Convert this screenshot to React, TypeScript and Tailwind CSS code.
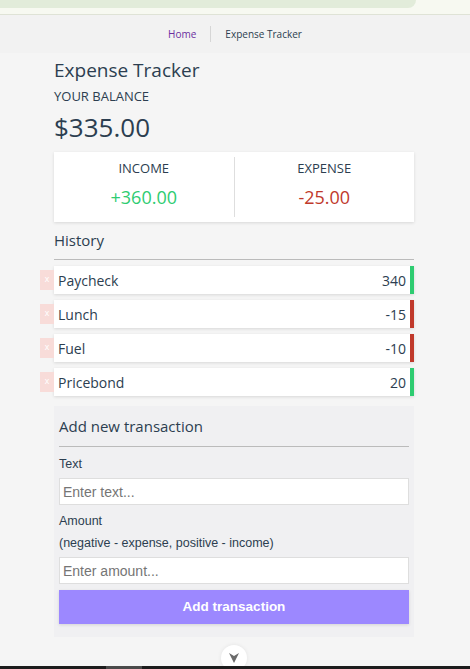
import React from "react";

const items = [
  { t: "Paycheck", a: "340", pos: true },
  { t: "Lunch", a: "-15", pos: false },
  { t: "Fuel", a: "-10", pos: false },
  { t: "Pricebond", a: "20", pos: true },
];

export default function App() {
  const seg = { fontFamily: '"Open Sans", "Noto Sans", sans-serif' };
  const arial = { fontFamily: '"Liberation Sans", Arial, sans-serif' };
  return (
    <div className="relative w-[470px] h-[669px] overflow-hidden bg-[#f5f5f5]" style={seg}>
      <div className="h-[15px] bg-[#f7f9f1] border-b border-[#dfe3d6]">
        <div className="h-[8px] w-[416px] bg-[#e2ecda] rounded-br-[10px]" />
      </div>
      <div className="h-[38px] bg-[#f2f2f2] flex items-center justify-center text-[10px] text-[#2c3e50]">
        <span className="text-[#6b2fa0]">Home</span>
        <span className="mx-[14px] w-px h-[16px] bg-[#d6d6d6]" />
        <span>Expense Tracker</span>
      </div>
      <div className="w-[360px] ml-[54px] text-[#2c3e50]">
        <h1 className="text-[19px] leading-[26px] mt-[4px]">Expense Tracker</h1>
        <div className="text-[13px] leading-[18px] mt-[4px] uppercase">Your balance</div>
        <div className="text-[26px] leading-[32px] mt-[6px]">$335.00</div>
        <div className="mt-[9px] h-[70px] bg-white shadow-[0_1px_3px_rgba(0,0,0,0.12)] flex">
          <div className="flex-1 flex flex-col items-center pt-[7px]">
            <div className="text-[13px] leading-[18px] uppercase">Income</div>
            <div className="text-[18px] leading-[24px] mt-[8px] text-[#2ecc71]">+360.00</div>
          </div>
          <div className="w-px bg-[#dedede] my-[5px]" />
          <div className="flex-1 flex flex-col items-center pt-[7px]">
            <div className="text-[13px] leading-[18px] uppercase">Expense</div>
            <div className="text-[18px] leading-[24px] mt-[8px] text-[#c0392b]">-25.00</div>
          </div>
        </div>
        <h3 className="text-[15px] leading-[22px] mt-[7px] pb-[8px] border-b border-[#bbb]">History</h3>
        <ul className="mt-[6px] flex flex-col gap-[6px]">
          {items.map((it) => (
            <li
              key={it.t}
              className={`relative h-[28px] bg-white flex items-center justify-between pl-[4px] pr-[4px] text-[14px] shadow-[0_1px_3px_rgba(0,0,0,0.12)] border-r-[4px] ${
                it.pos ? "border-[#2ecc71]" : "border-[#c0392b]"
              }`}
            >
              <span
                className="absolute left-[-14px] top-[4px] w-[14px] h-[20px] bg-[#f8dcd9] text-white text-[9px] flex items-center justify-center"
                style={arial}
              >
                x
              </span>
              <span>{it.t}</span>
              <span>{it.a}</span>
            </li>
          ))}
        </ul>
        <div className="mt-[10px] bg-[#f0f0f2] px-[5px] pt-[10px] pb-[13px]">
          <h3 className="text-[15px] leading-[20px] pb-[10px] border-b border-[#bbb]">Add new transaction</h3>
          <div className="text-[12.5px] leading-[16px] mt-[9px] text-[#2c3e50]" style={arial}>Text</div>
          <input
            className="mt-[6px] w-full h-[27px] bg-white border border-[#dedede] px-[3px] text-[14px] placeholder:text-[#757575] outline-none"
            style={arial}
            placeholder="Enter text..."
          />
          <div className="text-[12.5px] leading-[16px] mt-[8px] text-[#2c3e50]" style={arial}>Amount</div>
          <div className="text-[12.5px] leading-[16px] mt-[6px] text-[#2c3e50]" style={arial}>(negative - expense, positive - income)</div>
          <input
            className="mt-[6px] w-full h-[27px] bg-white border border-[#dedede] px-[3px] text-[14px] placeholder:text-[#757575] outline-none"
            style={arial}
            placeholder="Enter amount..."
          />
          <button
            className="mt-[6px] w-full h-[34px] bg-[#9c88ff] text-white font-bold text-[13.5px] shadow-[0_1px_3px_rgba(0,0,0,0.12)]"
            style={arial}
          >
            Add transaction
          </button>
        </div>
      </div>
      <div className="absolute left-[221px] top-[645px] w-[26px] h-[26px] rounded-full bg-white shadow-[0_0_4px_rgba(0,0,0,0.08)] flex items-start justify-center pt-[7px]">
        <svg width="12" height="12" viewBox="0 0 12 12">
          <path d="M1 1 L6 4 L11 1 L6 11 Z" fill="#6b6b6b" />
        </svg>
      </div>
      <div className="absolute left-0 bottom-0 w-full h-[3px] bg-[#1c1c1c]">
        <div className="ml-[106px] w-[36px] h-full bg-[#4a4a4a]" />
      </div>
    </div>
  );
}
